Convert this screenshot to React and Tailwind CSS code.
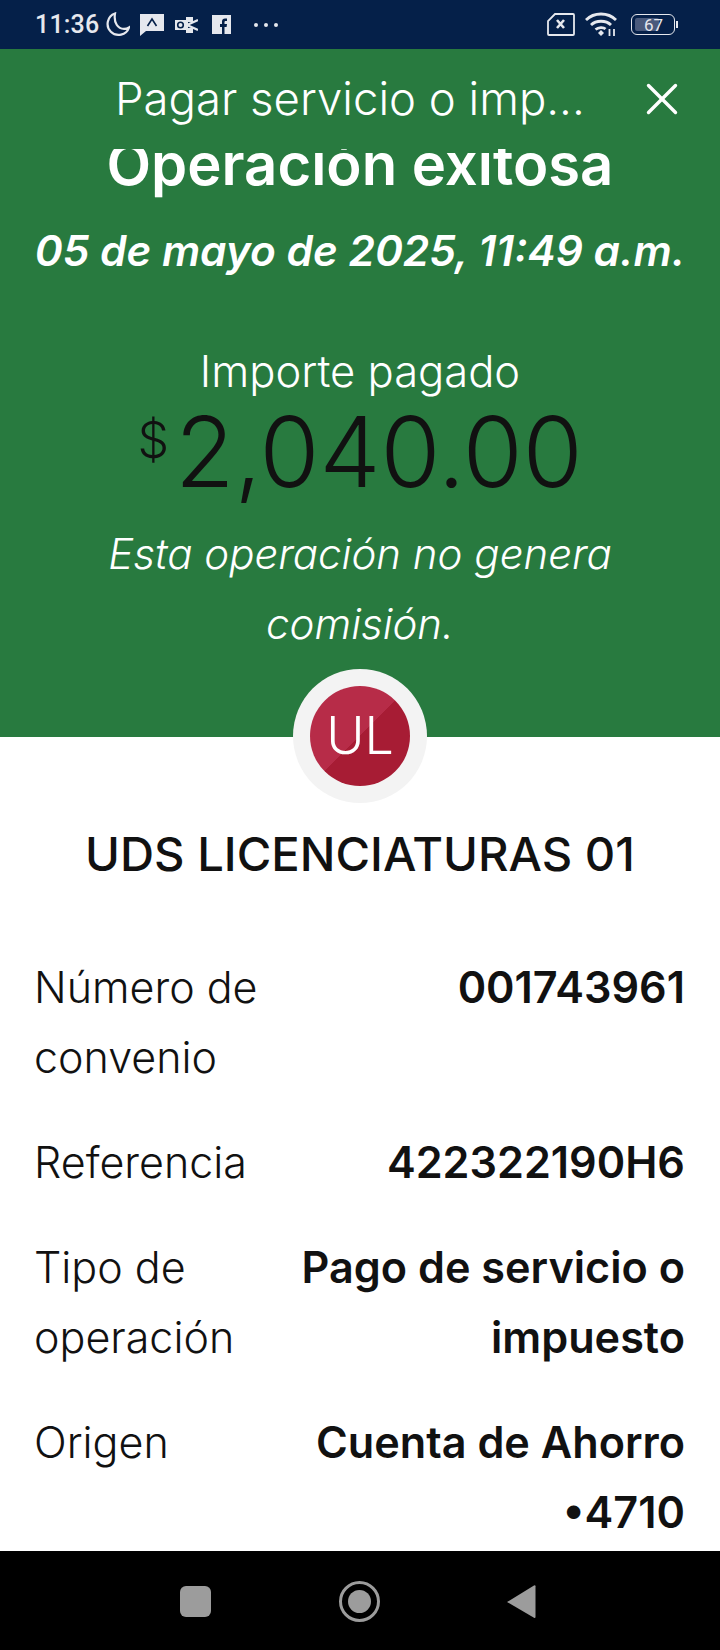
import { X } from 'lucide-react';

const rows = [
  { label: ['Número de', 'convenio'], value: ['001743961'] },
  { label: ['Referencia'], value: ['422322190H6'] },
  { label: ['Tipo de', 'operación'], value: ['Pago de servicio o', 'impuesto'] },
  { label: ['Origen'], value: ['Cuenta de Ahorro', '•4710'] },
];

function StatusBar() {
  return (
    <div className="h-[49px] shrink-0 bg-[#052049] flex items-center pl-[35px] pr-[42px] text-[#e6e8ee] font-['Roboto',sans-serif]">
      <span className="text-[25px] leading-none font-medium tracking-[0.2px] mt-[-1px]">11:36</span>
      <svg width="26" height="26" viewBox="0 0 26 26" className="ml-[5px]" fill="none" stroke="currentColor" strokeWidth="2.2">
        <path d="M11 1.500a11 11 0 1 0 14 14c-1.600 1-3.200 1.400-5 1.400C14 16.900 9.500 11 11 1.500z" />
      </svg>
      <svg width="24" height="23" viewBox="0 0 24 23" className="ml-[10px]">
        <path d="M0 1h24v17H6l-6 5z" fill="currentColor" />
        <path d="M7.500 13 12 6l4.500 7" fill="none" stroke="#052049" strokeWidth="1.600" />
      </svg>
      <svg width="23" height="16" viewBox="0 0 23 16" className="ml-[11px]">
        <path d="M0 3h11V0h7v5h-5v6h5v5h-7v-3H0z" fill="currentColor" />
        <path d="M12 8 23 3M12 8l11 5" stroke="currentColor" strokeWidth="2.400" fill="none" />
        <circle cx="5.500" cy="8" r="2.800" fill="none" stroke="#052049" strokeWidth="1.600" />
      </svg>
      <svg width="19" height="19" viewBox="0 0 19 19" className="ml-[14px]">
        <rect width="19" height="19" fill="currentColor" />
        <path d="M10 19v-7H8V9h2V6.500C10 4.500 11.200 3.500 13 3.500h2V6h-1.300c-.8 0-1.200.4-1.200 1.100V9H15l-.4 3h-2.100v7z" fill="#052049" />
      </svg>
      <span className="flex gap-[6px] ml-[23px]">
        <i className="size-[4px] rounded-full bg-current" />
        <i className="size-[4px] rounded-full bg-current" />
        <i className="size-[4px] rounded-full bg-current" />
      </span>
      <span className="flex-1" />
      <svg width="28" height="23" viewBox="0 0 28 23" fill="none">
        <path d="M8 1h18a1 1 0 0 1 1 1v19a1 1 0 0 1-1 1H2a1 1 0 0 1-1-1V8z" stroke="currentColor" strokeWidth="1.800" />
        <path d="M10 7l7 8M17 7l-7 8" stroke="currentColor" strokeWidth="2.600" />
      </svg>
      <svg width="32" height="25" viewBox="0 0 32 25" className="ml-[10px]" fill="none" stroke="currentColor" strokeWidth="2.800">
        <path d="M1 8c8-8 22-8 30 0" />
        <path d="M6 13c5-5 15-5 20 0" />
        <path d="M10.500 17.500c3-2.500 8-2.500 10 -.5" />
        <path d="M13 21l3-3 3 3-3 3z" fill="currentColor" stroke="none" />
        <path d="M24.500 17v7M29 17v7" strokeWidth="1.800" />
      </svg>
      <span className="ml-[14px] relative w-[47px] h-[21px] flex items-center">
        <span className="absolute left-0 top-0 w-[44px] h-[21px] rounded-[6px] border-[1.5px] border-current" />
        <span className="absolute left-[4px] top-[4px] w-[24px] h-[13px] rounded-[2px] bg-[#4a5a7c]" />
        <span className="absolute left-[13px] top-[1px] text-[17px] leading-[20px] font-normal">67</span>
        <span className="absolute right-0 top-[7px] w-[2px] h-[7px] bg-current" />
      </span>
    </div>
  );
}

function NavBar() {
  return (
    <div className="h-[99px] shrink-0 bg-black flex items-start pt-[35px] pl-[180px]">
      <div className="size-[31px] rounded-[6px] bg-[#9c9c9c]" />
      <div className="ml-[128px] mt-[-5px] size-[41px] rounded-full border-[3px] border-[#9c9c9c] flex items-center justify-center">
        <div className="size-[23px] rounded-full bg-[#9c9c9c]" />
      </div>
      <svg width="29" height="35" viewBox="0 0 29 35" className="ml-[127px] mt-[-2px]">
        <path d="M0 18 27 1.500a1 1 0 0 1 1.500.8V33a1 1 0 0 1-1.500.8z" fill="#9c9c9c" />
      </svg>
    </div>
  );
}

export default function App() {
  return (
    <div className="w-[720px] h-[1650px] flex flex-col overflow-hidden bg-white font-['Inter',sans-serif]">
      <StatusBar />

      <div className="h-[100px] shrink-0 bg-[#287a3f] text-white relative z-10 flex items-center">
        <span className="w-full pl-[115px] text-[45.5px] leading-none font-light">Pagar servicio o imp...</span>
        <X className="absolute left-[635px] top-[23px]" size={54} strokeWidth={1.500} />
      </div>

      {/* the body is scrolled a little, so the heading slides under the title bar */}
      <div className="flex-1 overflow-hidden">
        <div className="mt-[-15px]">
          <div className="bg-[#287a3f] text-white text-center pb-[78px]">
            <h1 className="text-[58px] leading-[60px] font-semibold">Operación exitosa</h1>
            <p className="mt-[32px] text-[42.4px] leading-[50px] font-semibold italic whitespace-nowrap">05 de mayo de 2025, 11:49 a.m.</p>
            <p className="mt-[68px] text-[43.5px] leading-[54px] font-light">Importe pagado</p>
            <div className="flex justify-center items-start text-[#111111] font-light mt-[4px]">
              <span className="text-[50px] leading-[64px] mt-[6px] mr-[6px]">$</span>
              <span className="text-[97px] leading-[100px]">2,040.00</span>
            </div>
            <p className="mt-[17px] px-[30px] text-[42px] leading-[70px] font-light italic">Esta operación no genera comisión.</p>
          </div>

          <div className="relative flex justify-center h-[68px]">
            <div className="absolute top-[-68px] size-[134px] rounded-full bg-[#f3f3f3] flex items-center justify-center">
              <div className="size-[100px] rounded-full bg-[linear-gradient(135deg,#b72c48_50%,#a71c34_50%)] flex items-center justify-center text-white text-[52px] font-light">UL</div>
            </div>
          </div>

          <h2 className="mt-[19px] text-center text-[#111111] text-[47.2px] leading-[60px] font-medium">UDS LICENCIATURAS 01</h2>

          <dl className="mt-[68px] pl-[34px] pr-[35px] text-[#111111] flex flex-col gap-[35px]">
            {rows.map((row) => (
              <div key={row.label[0]} className="flex justify-between text-[43px] leading-[70px]">
                <dt className="font-light">{row.label.map((l) => <div key={l}>{l}</div>)}</dt>
                <dd className="font-semibold text-[43.2px] text-right">{row.value.map((v) => <div key={v}>{v}</div>)}</dd>
              </div>
            ))}
          </dl>
        </div>
      </div>

      <NavBar />
    </div>
  );
}
